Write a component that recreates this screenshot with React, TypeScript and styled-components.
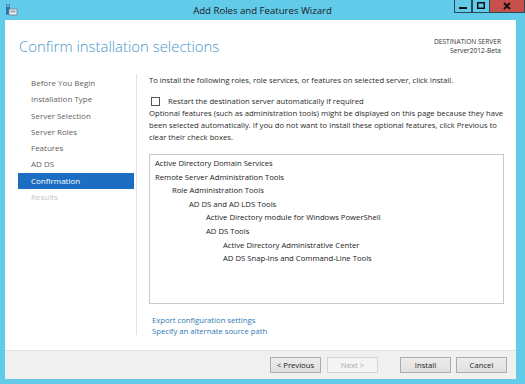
import React from "react";
import styled, { createGlobalStyle } from "styled-components";

const GlobalStyle = createGlobalStyle`
  html, body {
    margin: 0;
    padding: 0;
    background: #63cbea;
  }
  body {
    font-family: "Open Sans", "Noto Sans", sans-serif;
    color: #333;
  }
`;

const Frame = styled.div`
  width: 525px;
  height: 384px;
  display: flex;
  flex-direction: column;
  background: #63cbea;
  overflow: hidden;
`;

const TitleBar = styled.div`
  height: 20px;
  display: flex;
  align-items: center;
  position: relative;
  padding-left: 5px;
`;

const Title = styled.div`
  position: absolute;
  left: 0;
  right: 0;
  top: 4px;
  text-align: center;
  font-size: 9.6px;
  color: #1a1a1a;
`;

const Controls = styled.div`
  position: absolute;
  top: 0;
  right: 0;
  display: flex;
`;

const CtrlButton = styled.div<{ $close?: boolean }>`
  width: ${(p) => (p.$close ? "35px" : "18px")};
  height: 13px;
  box-sizing: border-box;
  border: 1px solid #2c4a55;
  border-top: none;
  border-left: ${(p) => (p.$close ? "none" : "1px solid #2c4a55")};
  background: ${(p) => (p.$close ? "#c7504c" : "transparent")};
  display: flex;
  align-items: center;
  justify-content: center;
`;

const Client = styled.div`
  margin: 0 9px 0 5px;
  flex: 1;
  display: flex;
  flex-direction: column;
  background: #fff;
`;

const Header = styled.div`
  height: 54px;
  display: flex;
  justify-content: space-between;
  padding: 0 15px 0 14px;
`;

const Heading = styled.h1`
  margin: 16px 0 0;
  font-size: 14.9px;
  font-weight: 300;
  color: #4a97cb;
`;

const Destination = styled.div`
  margin-top: 17px;
  text-align: right;
  font-size: 6.6px;
  line-height: 9px;
  color: #333;
`;

const Body = styled.div`
  flex: 1;
  display: flex;
`;

const Nav = styled.ul`
  list-style: none;
  margin: 0 2px 0 13px;
  padding: 1px 0 0;
  width: 116px;
`;

const NavItem = styled.li<{ $active?: boolean; $disabled?: boolean }>`
  height: 16.3px;
  line-height: 16px;
  padding-left: 13px;
  font-size: 8px;
  color: ${(p) => (p.$active ? "#fff" : p.$disabled ? "#c6c6c6" : "#5f5f5f")};
  background: ${(p) => (p.$active ? "#1b6ec2" : "transparent")};
`;

const Separator = styled.div`
  width: 1px;
  background: #e3e3e3;
  margin-bottom: 15px;
`;

const Content = styled.div`
  flex: 1;
  padding: 0 12px 0 12px;
  font-size: 7.7px;
  color: #2a2a2a;
`;

const Intro = styled.p`
  margin: 0;
  line-height: 12px;
`;

const CheckRow = styled.label`
  display: flex;
  align-items: center;
  margin-top: 9px;
  padding-left: 2px;
  line-height: 12px;
`;

const Box = styled.span`
  width: 7px;
  height: 7px;
  border: 1px solid #555;
  margin-right: 8px;
`;

const Note = styled.p`
  margin: 0;
  line-height: 12px;
`;

const ListBox = styled.div`
  margin-top: 11px;
  height: 150px;
  box-sizing: border-box;
  border: 1px solid #c9c9c9;
  padding: 2px 0 0 5px;
`;

const ListItem = styled.div<{ $level: number }>`
  padding-left: ${(p) => p.$level * 17}px;
  line-height: 13.6px;
  color: #1a1a1a;
`;

const Links = styled.div`
  margin-top: 11px;
  padding-left: 3px;
  display: flex;
  flex-direction: column;
`;

const Link = styled.a`
  color: #2f79b3;
  line-height: 11px;
  text-decoration: none;
`;

const Footer = styled.div`
  height: 29px;
  box-sizing: border-box;
  margin: 0 9px 5px 5px;
  background: #f0f0f0;
  border-top: 1px solid #dfdfdf;
  display: flex;
  justify-content: flex-end;
  padding: 6px 9px 0 0;
`;

const Button = styled.button<{ $gap?: number }>`
  width: 51px;
  height: 16px;
  box-sizing: border-box;
  margin-left: ${(p) => p.$gap ?? 0}px;
  border: 1px solid #acacac;
  background: linear-gradient(#ececec, #e0e0e0);
  font-family: "Open Sans", "Noto Sans", sans-serif;
  font-size: 7.7px;
  color: #222;
  padding: 0;

  &:disabled {
    border-color: #d5d5d5;
    background: #f4f4f4;
    color: #a8a8a8;
  }
`;

const AppIcon = () => (
  <svg width="13" height="12" viewBox="0 0 13 12">
    <rect x="1" y="0.5" width="4" height="10" fill="#2f6fb6" />
    <rect x="1.8" y="1.5" width="2.4" height="1" fill="#bfe3f7" />
    <rect x="4" y="5" width="8" height="6" fill="#e8eef2" stroke="#6f7f8a" strokeWidth="0.8" />
    <rect x="5.5" y="6.5" width="5" height="2" fill="#9aa8b2" />
  </svg>
);

const tree: [string, number][] = [
  ["Active Directory Domain Services", 0],
  ["Remote Server Administration Tools", 0],
  ["Role Administration Tools", 1],
  ["AD DS and AD LDS Tools", 2],
  ["Active Directory module for Windows PowerShell", 3],
  ["AD DS Tools", 3],
  ["Active Directory Administrative Center", 4],
  ["AD DS Snap-Ins and Command-Line Tools", 4],
];

const steps = [
  "Before You Begin",
  "Installation Type",
  "Server Selection",
  "Server Roles",
  "Features",
  "AD DS",
  "Confirmation",
  "Results",
];

const App = () => {
  return (
    <Frame>
      <GlobalStyle />
      <TitleBar>
        <AppIcon />
        <Title>Add Roles and Features Wizard</Title>
        <Controls>
          <CtrlButton>
            <svg width="8" height="8" viewBox="0 0 8 8">
              <rect x="0" y="5" width="8" height="2" fill="#111" />
            </svg>
          </CtrlButton>
          <CtrlButton>
            <svg width="8" height="8" viewBox="0 0 8 8">
              <rect x="0.75" y="0.75" width="6.5" height="5.5" fill="none" stroke="#111" strokeWidth="1.5" />
            </svg>
          </CtrlButton>
          <CtrlButton $close>
            <svg width="8" height="8" viewBox="0 0 8 8">
              <path d="M1 1 L7 7 M7 1 L1 7" stroke="#111" strokeWidth="1.8" />
            </svg>
          </CtrlButton>
        </Controls>
      </TitleBar>
      <Client>
        <Header>
          <Heading>Confirm installation selections</Heading>
          <Destination>
            DESTINATION SERVER
            <br />
            Server2012-Beta
          </Destination>
        </Header>
        <Body>
          <Nav>
            {steps.map((s) => (
              <NavItem key={s} $active={s === "Confirmation"} $disabled={s === "Results"}>
                {s}
              </NavItem>
            ))}
          </Nav>
          <Separator />
          <Content>
            <Intro>
              To install the following roles, role services, or features on selected server, click Install.
            </Intro>
            <CheckRow>
              <Box />
              Restart the destination server automatically if required
            </CheckRow>
            <Note>
              Optional features (such as administration tools) might be displayed on this page because they have
              been selected automatically. If you do not want to install these optional features, click Previous to
              clear their check boxes.
            </Note>
            <ListBox>
              {tree.map(([t, l]) => (
                <ListItem key={t} $level={l}>
                  {t}
                </ListItem>
              ))}
            </ListBox>
            <Links>
              <Link href="#">Export configuration settings</Link>
              <Link href="#">Specify an alternate source path</Link>
            </Links>
          </Content>
        </Body>
      </Client>
      <Footer>
        <Button>&lt; Previous</Button>
        <Button disabled $gap={6}>
          Next &gt;
        </Button>
        <Button $gap={22}>Install</Button>
        <Button $gap={5}>Cancel</Button>
      </Footer>
    </Frame>
  );
};

export default App;
